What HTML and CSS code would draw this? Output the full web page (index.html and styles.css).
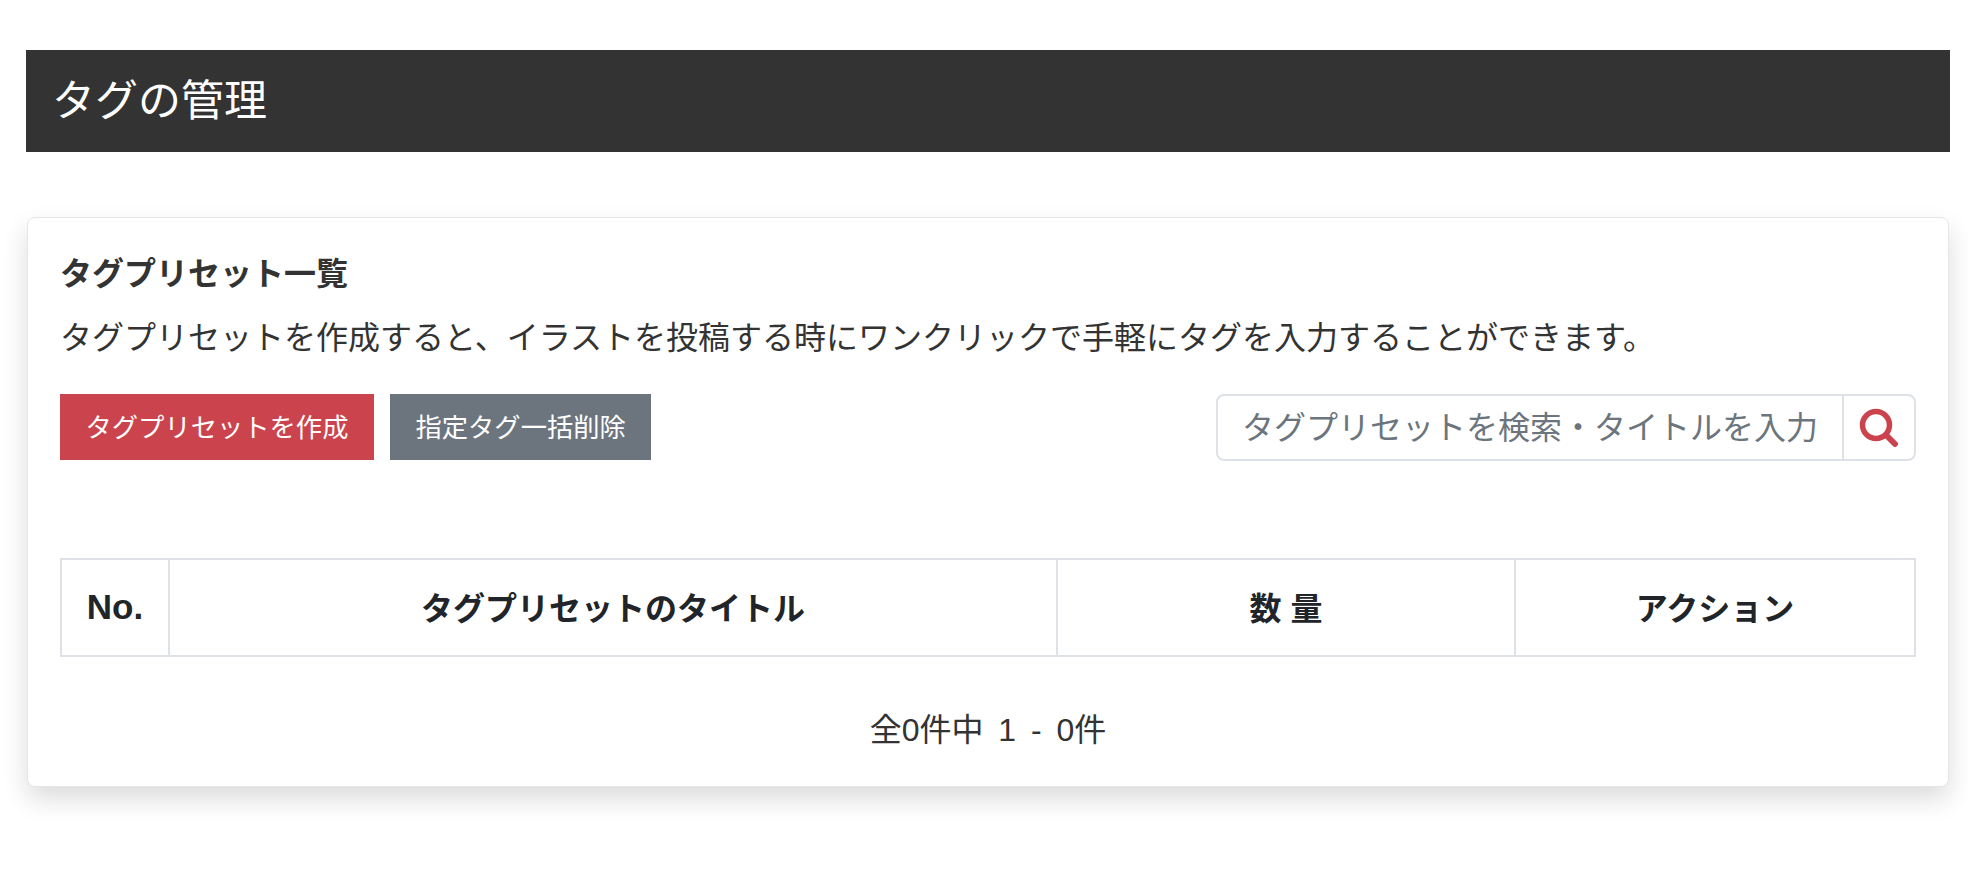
FILE: index.html
```html
<!DOCTYPE html>
<html lang="ja">
<head>
<meta charset="utf-8">
<title>タグの管理</title>
<link rel="stylesheet" href="styles.css">
</head>
<body>
<main class="page">
  <h1 class="page-title">タグの管理</h1>
  <section class="card">
    <h2 class="card-title">タグプリセット一覧</h2>
    <p class="card-desc">タグプリセットを作成すると、イラストを投稿する時にワンクリックで手軽にタグを入力することができます。</p>
    <div class="toolbar">
      <div class="actions">
        <button class="btn btn-red" type="button">タグプリセットを作成</button>
        <button class="btn btn-grey" type="button">指定タグ一括削除</button>
      </div>
      <form class="search">
        <input class="search-input" type="text" placeholder="タグプリセットを検索・タイトルを入力">
        <button class="search-btn" type="button" aria-label="検索">
          <svg class="search-icon" viewBox="0 0 40 40" width="40" height="40" aria-hidden="true">
            <circle cx="17" cy="17" r="13.5" fill="none" stroke="currentColor" stroke-width="5.5"/>
            <path d="M27 27 L36 36" fill="none" stroke="currentColor" stroke-width="6" stroke-linecap="round"/>
          </svg>
        </button>
      </form>
    </div>
    <table class="table">
      <colgroup>
        <col class="col-no"><col class="col-title"><col class="col-count"><col class="col-action">
      </colgroup>
      <thead>
        <tr>
          <th class="th-no">No.</th>
          <th>タグプリセットのタイトル</th>
          <th>数 量</th>
          <th>アクション</th>
        </tr>
      </thead>
    </table>
    <p class="count">全0件中 1 - 0件</p>
  </section>
</main>
</body>
</html>
```
FILE: styles.css
```css
* { box-sizing: border-box; }
html, body { margin: 0; background: #fff; }
body {
  font-family: "Liberation Sans", "Noto Sans CJK JP", sans-serif;
  color: #333;
}
.page {
  min-height: 100vh;
  padding: 50px 18px 0 26px;
}
.page-title {
  margin: 0;
  height: 102px;
  padding: 0 26px;
  background: #333;
  color: #fff;
  font-size: 43px;
  font-weight: 400;
  line-height: 102px;
}
.card {
  margin: 65px 1px 0;
  height: 570px;
  padding: 32px 32px 0;
  background: #fff;
  border: 1px solid #e6e6e8;
  border-radius: 8px;
  box-shadow: 0 12px 26px rgba(0, 0, 0, .14);
}
.card-title {
  margin: 0;
  font-size: 32px;
  font-weight: 700;
  line-height: 48px;
}
.card-desc {
  margin: 16px 0 0;
  font-size: 32px;
  line-height: 48px;
}
.toolbar {
  margin-top: 32px;
  display: flex;
  justify-content: space-between;
}
.actions { display: flex; gap: 16px; }
.btn {
  height: 66px;
  border: 0;
  padding: 0 25.5px 3px;
  color: #fff;
  font: inherit;
  font-size: 26.3px;
}
.btn-red { background: #cb444d; }
.btn-grey { background: #6c757d; }
.search {
  display: flex;
  width: 700px;
  height: 67px;
  border: 2px solid #dee2e6;
  border-radius: 8px;
}
.search-input {
  flex: 1;
  min-width: 0;
  border: 0;
  outline: 0;
  padding: 2px 0 0 24px;
  background: transparent;
  font: inherit;
  font-size: 32px;
  color: #333;
}
.search-input::placeholder { color: #6c757d; opacity: 1; }
.search-btn {
  width: 72px;
  padding: 0;
  border: 0;
  border-left: 2px solid #dee2e6;
  background: transparent;
  color: #cb444d;
  display: flex;
  align-items: center;
  justify-content: center;
}
.table {
  margin-top: 97px;
  width: 100%;
  height: 99px;
  table-layout: fixed;
  border-collapse: collapse;
}
.col-no { width: 108px; }
.col-title { width: 888px; }
.col-count { width: 458px; }
.table th {
  border: 2px solid #dee2e6;
  padding: 0 0 4px;
  color: #212529;
  font-size: 32px;
  font-weight: 700;
  text-align: center;
}
.table .th-no { font-size: 35px; padding-bottom: 2px; }
.count {
  margin: 50px 0 0;
  font-size: 32px;
  word-spacing: 6px;
  line-height: 46px;
  text-align: center;
}
```
